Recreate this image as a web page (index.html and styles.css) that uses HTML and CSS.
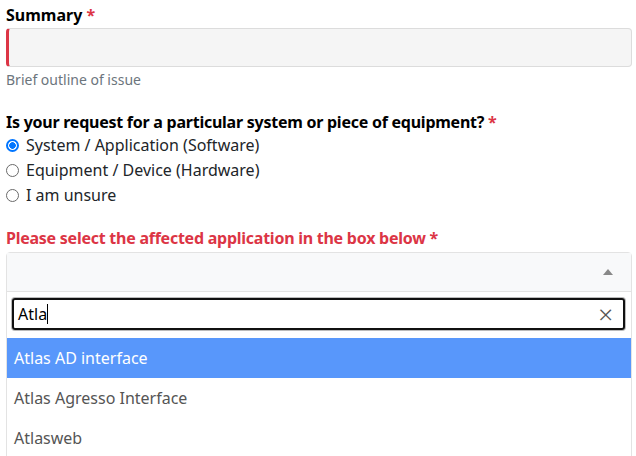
FILE: index.html
```html
<!DOCTYPE html>
<html>
<head>
<meta charset="utf-8">
<link rel="stylesheet" href="styles.css">
</head>
<body>
<div class="form">
  <div class="group">
    <label class="label">Summary <span class="req">*</span></label>
    <div class="text-input"></div>
    <div class="help">Brief outline of issue</div>
  </div>
  <div class="group q">
    <div class="label tight">Is your request for a particular system or piece of equipment? <span class="req">*</span></div>
    <div class="radio"><span class="dot checked"></span>System / Application (Software)</div>
    <div class="radio"><span class="dot"></span>Equipment / Device (Hardware)</div>
    <div class="radio"><span class="dot"></span>I am unsure</div>
  </div>
  <div class="group sel">
    <div class="label tight error">Please select the affected application in the box below <span>*</span></div>
    <div class="select">
      <div class="select-top"><span class="arrow"></span></div>
      <div class="dropdown">
        <div class="search-wrap">
          <div class="search"><span class="stext">Atla</span><span class="caret"></span><span class="clear">×</span></div>
        </div>
        <div class="opt active">Atlas AD interface</div>
        <div class="opt">Atlas Agresso Interface</div>
        <div class="opt">Atlasweb</div>
      </div>
    </div>
  </div>
</div>
</body>
</html>
```
FILE: styles.css
```css
html, body { margin: 0; padding: 0; background: #fff; }
body { font-family: "Segoe UI", "Noto Sans", sans-serif; font-size: 16px; color: #212529; }
.form { padding: 4px 4px 0 6px; }
.label { font-weight: 700; color: #000; line-height: 22px; display: block; }
.label.tight { letter-spacing: -0.25px; }
.req { color: #dc3545; }
.text-input { margin-top: 2px; height: 37px; background: #f5f5f5; border: 1px solid #dcdcdc; border-left: 3px solid #dc3545; border-radius: 4px; }
.help { color: #6c757d; font-size: 14px; line-height: 20px; margin-top: 3px; }
.q { margin-top: 21px; }
.radio { display: flex; align-items: center; line-height: 25px; color: #212529; }
.dot { width: 13px; height: 13px; border: 1px solid #6a6a6a; border-radius: 50%; margin: 0 7px 0 0; box-sizing: border-box; }
.dot.checked { border: 2px solid #0075ff; background: radial-gradient(circle, #0075ff 0 3px, #fff 3.6px); }
.sel { margin-top: 19px; }
.label.error { color: #dc3545; }
.select { margin-top: 3px; border: 1px solid #e3e3e3; border-radius: 4px 4px 0 0; }
.select-top { height: 38px; background: #f8f9fa; display: flex; justify-content: flex-end; align-items: center; padding-right: 18px; border-bottom: 1px solid #e3e3e3; }
.arrow { width: 0; height: 0; border-left: 5px solid transparent; border-right: 5px solid transparent; border-bottom: 6px solid #888; }
.dropdown { background: #fff; }
.search-wrap { padding: 6px 6px 8px 5px; }
.search { height: 28px; border: 2px solid #111; border-radius: 3px; box-shadow: 0 0 0 1px #bbb; display: flex; align-items: center; padding: 0 10px 0 4px; font-size: 16px; color: #000; }
.caret { width: 1px; height: 20px; background: #000; }
.clear { margin-left: auto; font-size: 26px; color: #555; line-height: 1; font-weight: 300; }
.opt { height: 40px; line-height: 40px; padding-left: 7px; color: #555; font-size: 16px; }
.opt.active { background: #5897fb; color: #fff; }
```
